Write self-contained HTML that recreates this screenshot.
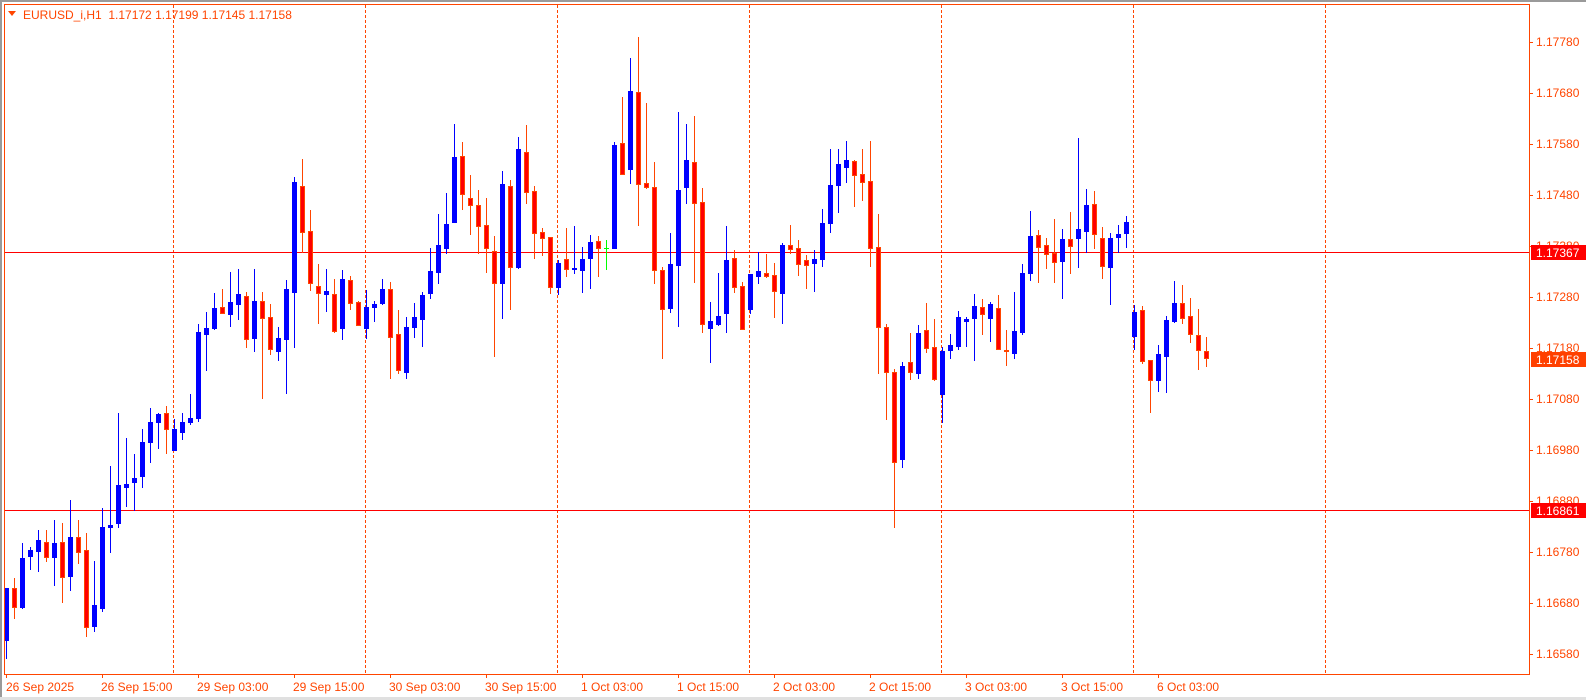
<!DOCTYPE html>
<html><head><meta charset="utf-8"><style>
html,body{margin:0;padding:0;background:#fff;width:1586px;height:700px;overflow:hidden}
svg{display:block}
text{font-family:"Liberation Sans",sans-serif;font-size:12px;fill:#ff4500}
</style></head><body>
<svg id="s" width="1586" height="700" xmlns="http://www.w3.org/2000/svg" shape-rendering="crispEdges">
<rect x="0" y="0" width="1586" height="700" fill="#fff"/>
<rect x="0" y="0" width="1586" height="2" fill="#9a9a9a"/>
<rect x="0" y="0" width="2" height="700" fill="#9a9a9a"/>
<rect x="0" y="697" width="1586" height="3" fill="#e0e0e0"/>
<g id="grid" stroke="#ff4500" stroke-width="1" stroke-dasharray="3,2">
<line x1="173.5" y1="5" x2="173.5" y2="674"/>
<line x1="365.5" y1="5" x2="365.5" y2="674"/>
<line x1="557.5" y1="5" x2="557.5" y2="674"/>
<line x1="749.5" y1="5" x2="749.5" y2="674"/>
<line x1="941.5" y1="5" x2="941.5" y2="674"/>
<line x1="1133.5" y1="5" x2="1133.5" y2="674"/>
<line x1="1325.5" y1="5" x2="1325.5" y2="674"/>
</g>
<line x1="5" y1="252.5" x2="1529" y2="252.5" stroke="#ff0000"/>
<line x1="5" y1="510.5" x2="1529" y2="510.5" stroke="#ff0000"/>
<g id="candles"></g>
<rect x="4.5" y="4.5" width="1525" height="670" fill="none" stroke="#ff4500"/>
<polygon points="8,11 16,11 12,16" fill="#ff4500" shape-rendering="auto"/>
<text x="23" y="19">EURUSD_i,H1&#160;&#160;1.17172 1.17199 1.17145 1.17158</text>
<g id="yt" stroke="#ff4500"></g>
<g>
<text x="1536" y="46">1.17780</text>
<text x="1536" y="97">1.17680</text>
<text x="1536" y="148">1.17580</text>
<text x="1536" y="199">1.17480</text>
<text x="1536" y="250">1.17380</text>
<text x="1536" y="301">1.17280</text>
<text x="1536" y="352">1.17180</text>
<text x="1536" y="403">1.17080</text>
<text x="1536" y="454">1.16980</text>
<text x="1536" y="505">1.16880</text>
<text x="1536" y="556">1.16780</text>
<text x="1536" y="607">1.16680</text>
<text x="1536" y="658">1.16580</text>
</g>
<rect x="1531" y="245" width="55" height="15" fill="#ff0000"/>
<text x="1536" y="257" style="fill:#fff">1.17367</text>
<rect x="1531" y="352" width="55" height="15" fill="#ff4000"/>
<text x="1536" y="364" style="fill:#fff">1.17158</text>
<rect x="1531" y="503" width="55" height="15" fill="#ff0000"/>
<text x="1536" y="515" style="fill:#fff">1.16861</text>
<g id="xt" stroke="#ff4500"></g>
<g>
<text x="6" y="691">26 Sep 2025</text>
<text x="101" y="691">26 Sep 15:00</text>
<text x="197" y="691">29 Sep 03:00</text>
<text x="293" y="691">29 Sep 15:00</text>
<text x="389" y="691">30 Sep 03:00</text>
<text x="485" y="691">30 Sep 15:00</text>
<text x="581" y="691">1 Oct 03:00</text>
<text x="677" y="691">1 Oct 15:00</text>
<text x="773" y="691">2 Oct 03:00</text>
<text x="869" y="691">2 Oct 15:00</text>
<text x="965" y="691">3 Oct 03:00</text>
<text x="1061" y="691">3 Oct 15:00</text>
<text x="1157" y="691">6 Oct 03:00</text>
</g>
</svg>
<script>
var D=[
[588,588,640,658,'u'],[578,588,607,618,'d'],[543,558,607,608,'u'],[547,550,556,569,'u'],[530,540,551,571,'u'],
[530,542,557,561,'d'],[520,543,557,585,'u'],[523,542,577,602,'d'],[500,537,576,590,'u'],[520,537,552,563,'d'],
[533,550,627,636,'d'],[561,605,626,631,'u'],[508,527,608,611,'u'],[466,525,527,552,'u'],[413,485,523,527,'u'],
[438,484,487,506,'u'],[454,478,482,510,'u'],[429,442,476,487,'u'],[408,422,442,462,'u'],[413,414,422,448,'u'],
[406,413,429,453,'d'],[419,429,450,450,'u'],[413,422,432,439,'u'],[394,418,422,424,'u'],[324,332,418,421,'u'],
[312,328,334,370,'u'],[293,308,328,329,'u'],[289,307,313,313,'d'],[272,302,314,326,'u'],[269,294,304,319,'u'],
[292,296,339,347,'d'],[269,301,338,351,'u'],[292,301,318,398,'d'],[304,317,349,354,'d'],[327,338,351,360,'u'],
[280,289,339,393,'u'],[177,182,292,347,'u'],[159,186,232,252,'d'],[210,231,283,290,'d'],[264,286,293,323,'d'],
[269,291,294,311,'u'],[279,294,331,332,'d'],[270,279,328,339,'u'],[276,280,303,309,'d'],[301,302,325,325,'d'],
[290,307,328,338,'u'],[301,304,307,321,'u'],[279,289,303,304,'u'],[282,289,337,378,'d'],[310,334,370,373,'d'],
[317,327,372,378,'u'],[303,317,327,337,'u'],[292,295,319,346,'u'],[248,271,293,298,'u'],[214,245,272,283,'u'],
[193,224,248,253,'u'],[124,157,222,222,'u'],[142,156,194,209,'d'],[175,198,205,234,'d'],[190,205,226,253,'d'],
[198,225,248,272,'d'],[236,251,283,356,'d'],[171,184,283,318,'u'],[180,186,267,309,'d'],[137,149,267,268,'u'],
[125,152,192,203,'d'],[186,191,233,258,'d'],[228,232,238,255,'d'],[237,237,287,293,'d'],[260,263,287,294,'u'],
[228,259,269,276,'d'],[226,268,269,273,'u'],[247,259,270,292,'u'],[235,242,258,288,'u'],[236,241,248,276,'d'],
[240,248,249,269,'g'],[142,145,248,248,'u'],[97,143,174,174,'d'],[58,91,169,183,'u'],[37,92,184,225,'d'],
[103,183,187,188,'d'],[162,187,270,283,'d'],[267,270,309,358,'d'],[233,264,308,312,'u'],[112,190,265,326,'u'],
[124,160,187,203,'u'],[116,162,203,282,'d'],[188,202,324,332,'d'],[302,321,328,362,'u'],[273,316,324,325,'u'],
[226,260,313,332,'u'],[250,258,287,292,'d'],[282,286,329,329,'d'],[274,274,309,313,'u'],[252,271,276,283,'u'],
[254,273,276,277,'d'],[263,275,291,317,'d'],[243,245,293,323,'u'],[225,245,249,253,'d'],[240,248,264,275,'d'],
[255,260,265,288,'d'],[250,259,263,291,'u'],[209,223,259,266,'u'],[149,185,223,232,'u'],[149,164,185,212,'u'],
[141,160,167,182,'u'],[160,161,175,206,'d'],[149,174,182,200,'d'],[141,181,248,266,'d'],[214,247,327,373,'d'],
[324,327,372,419,'d'],[369,372,462,527,'d'],[362,366,459,467,'u'],[333,362,372,379,'d'],[325,333,373,378,'u'],
[303,330,348,352,'d'],[319,347,379,380,'d'],[347,351,394,422,'u'],[334,345,350,358,'u'],[311,317,346,349,'u'],
[317,319,321,346,'u'],[294,306,318,360,'u'],[299,307,314,334,'d'],[302,304,318,341,'u'],[295,308,349,349,'d'],
[330,350,351,365,'d'],[292,331,353,358,'u'],[264,273,332,334,'u'],[211,236,273,280,'u'],[230,235,247,282,'d'],
[238,245,254,268,'d'],[219,253,262,282,'d'],[229,239,261,298,'u'],[212,239,246,273,'d'],[138,229,238,267,'u'],
[189,205,231,252,'u'],[191,204,234,248,'d'],[227,238,266,278,'d'],[233,238,267,304,'u'],[225,234,237,252,'u'],
[216,222,233,247,'u'],[305,312,336,349,'u'],[306,310,361,363,'d'],[360,360,380,412,'d'],[345,354,380,391,'u'],
[316,320,356,392,'u'],[281,303,321,322,'u'],[285,303,318,323,'d'],[298,316,334,342,'d'],[309,335,350,369,'d'],
[337,351,358,366,'d']];
var NS="http://www.w3.org/2000/svg",g=document.getElementById('candles');
function R(x,y,w,h,f){var r=document.createElementNS(NS,'rect');r.setAttribute('x',x);r.setAttribute('y',y);r.setAttribute('width',w);r.setAttribute('height',Math.max(h,1));r.setAttribute('fill',f);g.appendChild(r);}
D.forEach(function(c,i){var x=6+8*i,hi=c[0],bt=c[1],bb=c[2],lo=c[3],t=c[4];
 var wc=t=='u'?'#0000ff':(t=='g'?'#00ff00':'#ff4500');
 R(x,hi,1,lo-hi+1,wc);
 if(t=='u'){R(x-2,bt,5,bb-bt+1,'#0000ff');}
 else if(t=='g'){R(x-2,bt,5,1,'#00ff00');}
 else{R(x-2,bt,5,bb-bt+1,'#ff4500');if(bb-bt>1)R(x-1,bt+1,3,bb-bt-1,'#ff0000');}
});
var yt=document.getElementById('yt');
for(var k=0;k<13;k++){var y=Math.round(41.7+51*k)+0.5;var l=document.createElementNS(NS,'line');l.setAttribute('x1',1529);l.setAttribute('x2',1533);l.setAttribute('y1',y);l.setAttribute('y2',y);yt.appendChild(l);}
var xt=document.getElementById('xt');
for(var k=0;k<13;k++){var x=6+96*k+0.5;var l=document.createElementNS(NS,'line');l.setAttribute('x1',x);l.setAttribute('x2',x);l.setAttribute('y1',674);l.setAttribute('y2',678);xt.appendChild(l);}
</script>
</body></html>
